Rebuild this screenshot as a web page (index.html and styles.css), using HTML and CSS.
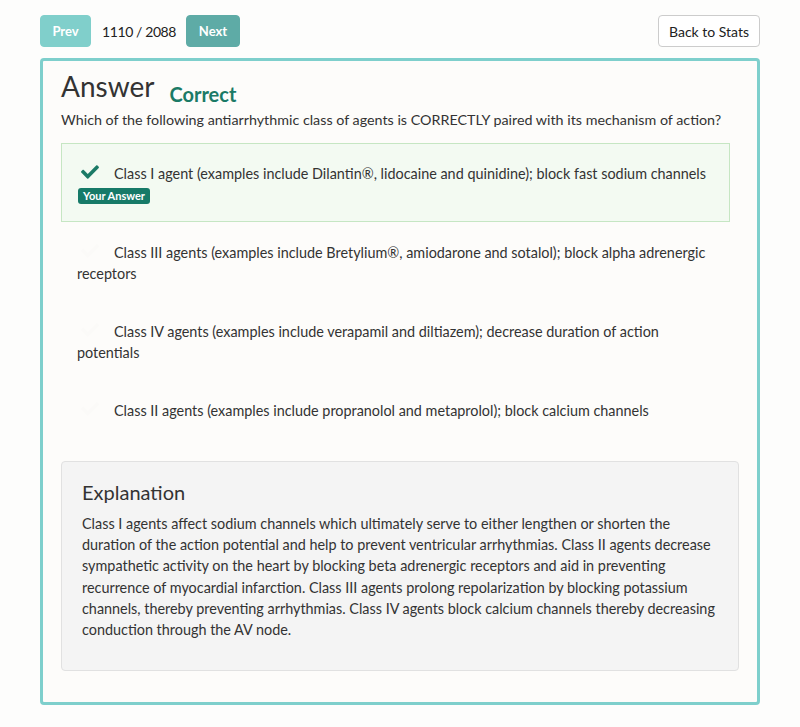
FILE: index.html
```html
<!DOCTYPE html>
<html>
<head>
<meta charset="utf-8">
<link rel="stylesheet" href="styles.css">
</head>
<body>
<div class="page">
  <div class="topbar">
    <div class="nav">
      <button class="btn btn-prev">Prev</button>
      <span class="counter">1110 / 2088</span>
      <button class="btn btn-next">Next</button>
    </div>
    <button class="btn btn-back">Back to Stats</button>
  </div>
  <div class="card">
    <div class="title-row">
      <h1 class="title">Answer</h1>
      <span class="status">Correct</span>
    </div>
    <p class="question">Which of the following antiarrhythmic class of agents is CORRECTLY paired with its mechanism of action?</p>
    <div class="options">
      <div class="option option-correct">
        <svg class="check" viewBox="0 0 512 512"><path d="M173.9 439.4L7.5 273c-10-10-10-26.2 0-36.2l36.2-36.2c10-10 26.2-10 36.2 0L192 312.7 432.1 72.6c10-10 26.2-10 36.2 0l36.2 36.2c10 10 10 26.2 0 36.2L210.1 439.4c-10 10-26.2 10-36.2 0z"/></svg>Class I agent (examples include Dilantin®, lidocaine and quinidine); block fast sodium channels
        <div class="badge-row"><span class="badge">Your Answer</span></div>
      </div>
      <div class="option">
        <svg class="check ghost" viewBox="0 0 512 512"><path d="M173.9 439.4L7.5 273c-10-10-10-26.2 0-36.2l36.2-36.2c10-10 26.2-10 36.2 0L192 312.7 432.1 72.6c10-10 26.2-10 36.2 0l36.2 36.2c10 10 10 26.2 0 36.2L210.1 439.4c-10 10-26.2 10-36.2 0z"/></svg>Class III agents (examples include Bretylium®, amiodarone and sotalol); block alpha adrenergic receptors
      </div>
      <div class="option">
        <svg class="check ghost" viewBox="0 0 512 512"><path d="M173.9 439.4L7.5 273c-10-10-10-26.2 0-36.2l36.2-36.2c10-10 26.2-10 36.2 0L192 312.7 432.1 72.6c10-10 26.2-10 36.2 0l36.2 36.2c10 10 10 26.2 0 36.2L210.1 439.4c-10 10-26.2 10-36.2 0z"/></svg>Class IV agents (examples include verapamil and diltiazem); decrease duration of action potentials
      </div>
      <div class="option">
        <svg class="check ghost" viewBox="0 0 512 512"><path d="M173.9 439.4L7.5 273c-10-10-10-26.2 0-36.2l36.2-36.2c10-10 26.2-10 36.2 0L192 312.7 432.1 72.6c10-10 26.2-10 36.2 0l36.2 36.2c10 10 10 26.2 0 36.2L210.1 439.4c-10 10-26.2 10-36.2 0z"/></svg>Class II agents (examples include propranolol and metaprolol); block calcium channels
      </div>
    </div>
    <div class="explanation">
      <h2 class="exp-title">Explanation</h2>
      <p class="exp-text">Class I agents affect sodium channels which ultimately serve to either lengthen or shorten the duration of the action potential and help to prevent ventricular arrhythmias. Class II agents decrease sympathetic activity on the heart by blocking beta adrenergic receptors and aid in preventing recurrence of myocardial infarction. Class III agents prolong repolarization by blocking potassium channels, thereby preventing arrhythmias. Class IV agents block calcium channels thereby decreasing conduction through the AV node.</p>
    </div>
  </div>
</div>
</body>
</html>
```

FILE: styles.css
```css
html, body {
  margin: 0;
  padding: 0;
  background: #fdfdfc;
}
body {
  font-family: Lato, "Open Sans", sans-serif;
  color: #333;
  font-size: 14px;
}
.page {
  width: 720px;
  margin: 0 auto;
  padding-top: 15px;
}
.topbar {
  display: flex;
  justify-content: space-between;
  align-items: center;
  margin-bottom: 11px;
}
.nav {
  display: flex;
  align-items: center;
  gap: 11px;
}
.btn {
  font-family: Lato, sans-serif;
  height: 32px;
  border-radius: 4px;
  border: 1px solid transparent;
  padding: 0;
  font-size: 13px;
  cursor: pointer;
}
.btn-prev {
  background: #80cfcb;
  border-color: #80cfcb;
  color: #fff;
  font-weight: 700;
  width: 51px;
}
.btn-next {
  background: #5eaba6;
  border-color: #5eaba6;
  color: #fff;
  font-weight: 700;
  width: 54px;
}
.counter {
  font-size: 14px;
  letter-spacing: -0.4px;
  color: #222;
  white-space: nowrap;
  width: 73px;
}
.btn-back {
  background: #fff;
  border-color: #ccc;
  color: #222;
  font-size: 14px;
  width: 102px;
}
.card {
  border: 3px solid #7ecfcc;
  border-radius: 4px;
  background: #fdfcfa;
  padding: 8px 18px 31px 18px;
}
.title-row {
  display: flex;
  align-items: baseline;
  gap: 15px;
}
.title {
  margin: 0;
  font-size: 28px;
  font-weight: 400;
  line-height: 34px;
  color: #333;
}
.status {
  font-size: 20px;
  font-weight: 700;
  color: #1b7a66;
  position: relative;
  top: 5px;
}
.question {
  margin: 6px 0 13px 0;
  line-height: 21px;
  font-size: 14.3px;
}
.options {
  margin-right: 9px;
  margin-bottom: 2px;
}
.option {
  padding: 19px 15px 16px 15px;
  min-height: 42px;
  line-height: 21px;
  font-size: 14.4px;
  border: 1px solid transparent;
}
.option-correct {
  background: #f3faf2;
  border-color: #c6e6c3;
}
.check {
  width: 22px;
  height: 18px;
  margin: 0 13px 0 2px;
  vertical-align: -2px;
  fill: #1b7a66;
}
.check.ghost {
  fill: #fbfaf8;
}
.badge-row {
  height: 21px;
  line-height: 21px;
}
.badge {
  display: inline-block;
  background: #167a68;
  color: #fff;
  font-size: 11px;
  font-weight: 700;
  line-height: 16px;
  padding: 0 5px;
  border-radius: 3px;
  margin-left: 1px;
  vertical-align: middle;
}
.explanation {
  background: #f4f4f4;
  border: 1px solid #e1e1e1;
  border-radius: 4px;
  padding: 16px 20px 23px 20px;
}
.exp-title {
  margin: 0 0 7px 0;
  font-size: 20px;
  font-weight: 400;
  line-height: 28px;
  color: #333;
}
.exp-text {
  margin: 0;
  line-height: 21.2px;
  font-size: 14.4px;
  min-height: 134px;
}
```
